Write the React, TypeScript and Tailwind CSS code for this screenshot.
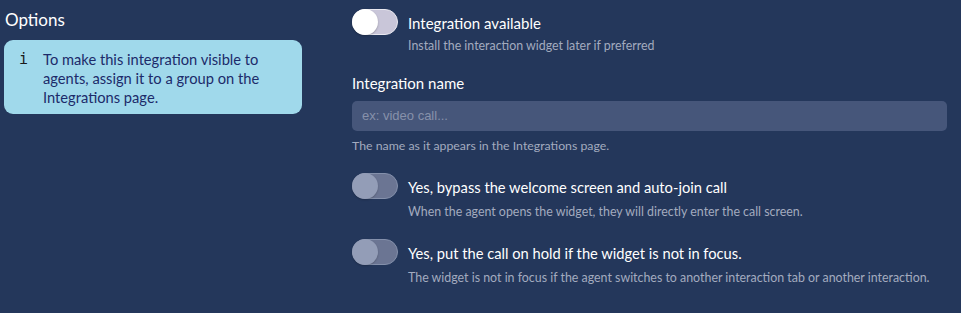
import React from "react";

function Toggle({ on }: { on: boolean }) {
  if (on) {
    return (
      <div className="relative w-[46px] h-[26px] shrink-0 rounded-full bg-[#c9c6d9] border border-[#e9e8f0]">
        <div className="absolute left-[-1px] top-[-1px] w-[26px] h-[26px] rounded-full bg-white shadow-[0_1px_2px_rgba(0,0,0,0.25)]" />
      </div>
    );
  }
  return (
    <div className="relative w-[46px] h-[26px] shrink-0 rounded-full bg-[#6b7593] border border-[#8490ab]">
      <div className="absolute left-[-1px] top-[-1px] w-[26px] h-[26px] rounded-full bg-[#939db7] shadow-[0_1px_2px_rgba(0,0,0,0.2)]" />
    </div>
  );
}

function ToggleRow({
  on,
  label,
  sub,
  subMt,
  labelSize,
}: {
  on: boolean;
  label: string;
  sub: string;
  subMt: string;
  labelSize: string;
}) {
  return (
    <div className="flex items-start gap-[10px]">
      <Toggle on={on} />
      <div className="flex flex-col">
        <div className={`pt-[2px] h-[26px] leading-[24px] ${labelSize} text-white`}>{label}</div>
        <div className={`${subMt} leading-[16px] text-[12.4px] text-[#a3abbf]`}>{sub}</div>
      </div>
    </div>
  );
}

export default function App() {
  return (
    <div
      className="w-[961px] h-[313px] bg-[#24375b] flex overflow-hidden"
      style={{ fontFamily: "Lato, 'Noto Sans', sans-serif" }}
    >
      <div className="w-[302px] pl-[4px] shrink-0 flex flex-col">
        <div className="mt-[9px] pl-[1px] h-[22px] leading-[22px] text-[17px] text-white">Options</div>
        <div className="mt-[9px] rounded-[9px] bg-[#a0d9eb] flex pt-[10px] pb-[7px] pl-[15px] pr-[10px]">
          <div
            className="w-[24px] shrink-0 text-[15px] leading-[19px] text-[#1a1a1a]"
            style={{ fontFamily: "'DejaVu Sans Mono', monospace" }}
          >
            i
          </div>
          <div className="text-[14.7px] leading-[19px] text-[#1c2b6a]">
            To make this integration visible to agents, assign it to a group on the Integrations page.
          </div>
        </div>
      </div>
      <div className="ml-[50px] w-[595px] flex flex-col pt-[9px]">
        <ToggleRow
          on={true}
          label="Integration available"
          sub="Install the interaction widget later if preferred"
          subMt="mt-[3px]"
          labelSize="text-[15px]"
        />
        <div className="mt-[19px] h-[20px] leading-[20px] text-[15px] text-white">Integration name</div>
        <div className="mt-[8px] h-[30px] rounded-[5px] bg-[#46567a] flex items-center px-[10px]">
          <span
            className="text-[13px] text-[#8791aa]"
            style={{ fontFamily: "'Liberation Sans', Arial, sans-serif" }}
          >
            ex: video call...
          </span>
        </div>
        <div className="mt-[7px] leading-[16px] text-[12.3px] text-[#a3abbf]">
          The name as it appears in the Integrations page.
        </div>
        <div className="mt-[19px]">
          <ToggleRow
            on={false}
            label="Yes, bypass the welcome screen and auto-join call"
            sub="When the agent opens the widget, they will directly enter the call screen."
            subMt="mt-[5px]"
            labelSize="text-[14.7px]"
          />
        </div>
        <div className="mt-[19px]">
          <ToggleRow
            on={false}
            label="Yes, put the call on hold if the widget is not in focus."
            sub="The widget is not in focus if the agent switches to another interaction tab or another interaction."
            subMt="mt-[5px]"
            labelSize="text-[14.7px]"
          />
        </div>
      </div>
    </div>
  );
}
